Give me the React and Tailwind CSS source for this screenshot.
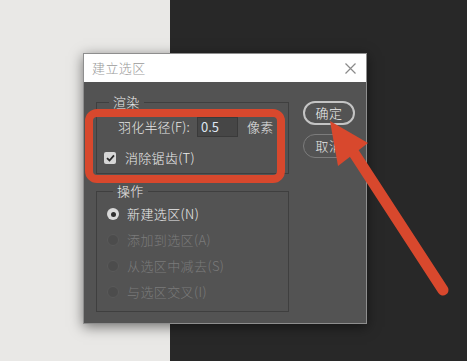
import React from 'react';

const font = { fontFamily: '"Noto Sans CJK SC", "Noto Sans", "Liberation Sans", sans-serif' };

function Radio({ checked, disabled, label }) {
  return (
    <div className="flex items-center h-[26px] pl-[10px]">
      {checked ? (
        <span className="w-[12px] h-[12px] rounded-full bg-[#d9d9d9] flex items-center justify-center">
          <span className="w-[5px] h-[5px] rounded-full bg-[#2e2e2e]" />
        </span>
      ) : (
        <span className="w-[12px] h-[12px] rounded-full bg-[#4c4c4c] border border-[#595959]" />
      )}
      <span className={'ml-[8px] text-[13px] font-light tracking-[0.4px] leading-[20px] ' + (disabled ? 'text-[#7b7b7b]' : 'text-[#ececec]')}>
        {label}
      </span>
    </div>
  );
}

export default function App() {
  return (
    <div className="relative w-[467px] h-[361px] flex overflow-hidden" style={font}>
      <div className="w-[170px] h-full bg-[#e9e8e6]" />
      <div className="flex-1 h-full bg-[#282828]" />

      {/* dialog window */}
      <div className="absolute left-[83px] top-[53px] w-[284px] border border-[#8e8e8e] shadow-[0_3px_12px_rgba(0,0,0,0.5)]">
        <div className="h-[28px] bg-white flex items-center justify-between pl-[8px] pr-[10px]">
          <span className="text-[13px] font-light text-[#9a9a9a] tracking-[0.4px]">建立选区</span>
          <svg width="11" height="11" viewBox="0 0 11 11">
            <path d="M0.5 0.5 L10.5 10.5 M10.5 0.5 L0.5 10.5" stroke="#8a8a8a" strokeWidth="1.2" />
          </svg>
        </div>

        <div className="bg-[#535353] flex pl-[12px] pr-[11px] pt-[10px] pb-[11px]">
          <div className="w-[193px]">
            <fieldset className="border border-[#3f3f3f] p-0">
              <legend className="ml-[12px] px-[4px] text-[13px] font-light leading-[20px] text-[#ececec] tracking-[0.3px]">渲染</legend>
              <div className="flex items-center mt-[5px] pl-[21px] h-[20px]">
                <span className="text-[13px] font-light text-[#e6e6e6] tracking-[0.2px]">羽化半径(F):</span>
                <div className="ml-[7px] w-[41px] h-[20px] bg-[#464646] border border-[#3a3a3a] flex items-center pl-[3px] text-[13px] text-[#dfe6f2]">
                  0.5
                </div>
                <span className="ml-[9px] text-[13px] font-light text-[#e6e6e6] tracking-[0.3px]">像素</span>
              </div>
              <div className="flex items-center mt-[11px] mb-[5px] pl-[7px] h-[20px]">
                <span className="w-[12px] h-[12px] rounded-[2px] bg-[#d6d6d6] flex items-center justify-center">
                  <svg width="9" height="8" viewBox="0 0 9 8">
                    <path d="M1 4.2 L3.5 6.5 L8 1.3" stroke="#2a2a2a" strokeWidth="1.8" fill="none" />
                  </svg>
                </span>
                <span className="ml-[9px] text-[13px] font-light text-[#ececec] tracking-[0.3px]">消除锯齿(T)</span>
              </div>
            </fieldset>

            <fieldset className="border border-[#3f3f3f] p-0 mt-[7px]">
              <legend className="ml-[16px] px-[4px] text-[13px] font-light leading-[20px] text-[#ececec] tracking-[0.3px]">操作</legend>
              <div className="pb-[6px]">
                <Radio checked label="新建选区(N)" />
                <Radio disabled label="添加到选区(A)" />
                <Radio disabled label="从选区中减去(S)" />
                <Radio disabled label="与选区交叉(I)" />
              </div>
            </fieldset>
          </div>

          <div className="ml-[14px] flex flex-col pt-[9px]">
            <button className="w-[52px] h-[24px] rounded-full border-2 border-[#c4c4c4] text-[13px] font-light text-[#f0f0f0] tracking-[0.5px]">
              确定
            </button>
            <button className="mt-[9px] w-[52px] h-[24px] rounded-full border border-[#7c7c7c] text-[13px] font-light text-[#e6e6e6] tracking-[0.5px]">
              取消
            </button>
          </div>
        </div>
      </div>

      {/* red annotation */}
      <div className="absolute left-[85px] top-[109px] w-[200px] h-[74px] border-[8px] border-[#d8482d] rounded-[12px]" />
      <svg className="absolute left-0 top-0" width="467" height="361" viewBox="0 0 467 361">
        <line x1="352" y1="150" x2="443" y2="290" stroke="#d8482d" strokeWidth="11" strokeLinecap="round" />
        <polygon points="330,121 338,166 368,143" fill="#d8482d" />
      </svg>
    </div>
  );
}
